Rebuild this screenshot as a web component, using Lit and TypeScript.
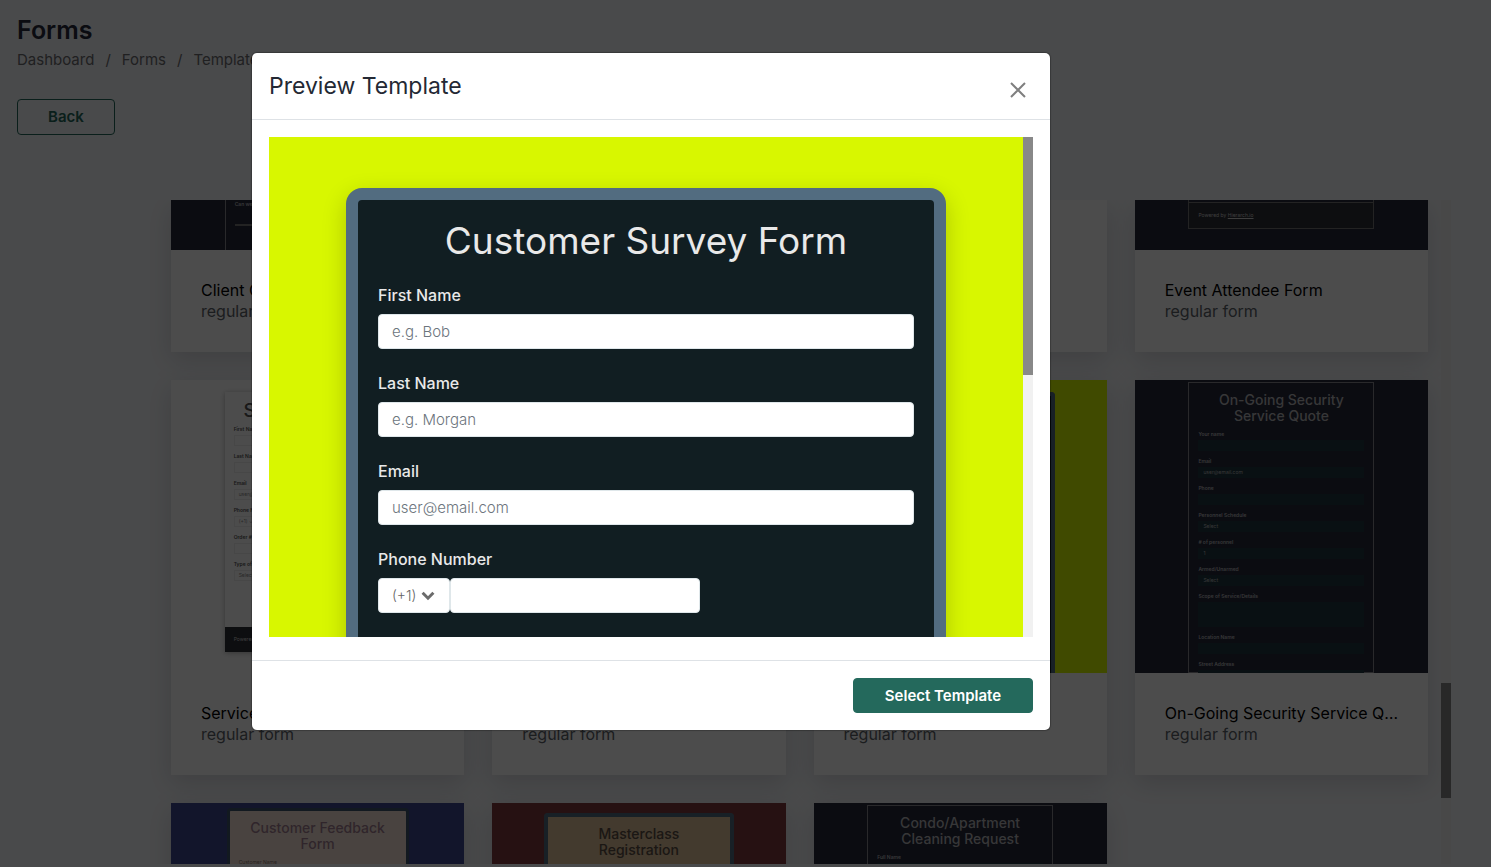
import { LitElement, html, css, svg, nothing } from "lit";
import { customElement, property } from "lit/decorators.js";
import { classMap } from "lit/directives/class-map.js";

interface Field {
  label: string;
  value?: string;
  tall?: boolean;
}

interface Template {
  name: string;
  theme: string;
  heading: string[];
  fields: Field[];
  footer?: string;
  tail?: boolean;
}

const TEMPLATES: Template[] = [
  { name: "Client Contact Form", theme: "night", heading: [], fields: [{ label: "Can we contact you?" }], tail: true },
  { name: "Contact Form", theme: "plain", heading: [], fields: [], tail: true },
  { name: "Booking Form", theme: "plain", heading: [], fields: [], tail: true },
  { name: "Event Attendee Form", theme: "night", heading: [], fields: [], footer: "Hierarch.io", tail: true },
  {
    name: "Service Request Form",
    theme: "light",
    heading: ["Service Request"],
    fields: [
      { label: "First Name" },
      { label: "Last Name" },
      { label: "Email", value: "user@email.com" },
      { label: "Phone Number", value: "(+1) ⌄" },
      { label: "Order #" },
      { label: "Type of Service", value: "Select" },
    ],
    footer: "Hierarch.io",
  },
  { name: "Feedback Form", theme: "plain", heading: [], fields: [] },
  { name: "Customer Survey Form", theme: "lime", heading: [], fields: [] },
  {
    name: "On-Going Security Service Quote",
    theme: "night",
    heading: ["On-Going Security", "Service Quote"],
    fields: [
      { label: "Your name" },
      { label: "Email", value: "user@email.com" },
      { label: "Phone" },
      { label: "Personnel Schedule", value: "Select" },
      { label: "# of personnel", value: "1" },
      { label: "Armed/Unarmed", value: "Select" },
      { label: "Scope of Service/Details", tall: true },
      { label: "Location Name" },
      { label: "Street Address" },
    ],
  },
  { name: "Customer Feedback Form", theme: "blue", heading: ["Customer Feedback", "Form"], fields: [{ label: "Customer Name" }] },
  { name: "Masterclass Registration", theme: "red", heading: ["Masterclass", "Registration"], fields: [] },
  {
    name: "Condo/Apartment Cleaning Request",
    theme: "night",
    heading: ["Condo/Apartment", "Cleaning Request"],
    fields: [{ label: "Full Name" }],
  },
];

@customElement("template-card")
class TemplateCard extends LitElement {
  @property({ attribute: false }) template!: Template;

  static styles = css`
    :host {
      display: block;
      min-width: 0;
      background: #fff;
      box-shadow: 0 8px 24px rgba(60, 60, 70, 0.18);
    }
    .thumb {
      box-sizing: border-box;
      aspect-ratio: 1;
      overflow: hidden;
      display: flex;
      justify-content: center;
      padding-top: 2px;
    }
    .thumb.tail {
      aspect-ratio: auto;
      height: 50px;
      padding-top: 0;
    }
    .form {
      box-sizing: border-box;
      width: 186px;
      min-height: 100%;
      padding: 9px 9px 0;
      border: 1px solid transparent;
      display: flex;
      flex-direction: column;
    }
    .heading {
      margin: 0 0 6px;
      font-size: 14px;
      line-height: 16px;
      font-weight: 500;
      text-align: center;
      white-space: nowrap;
    }
    .line {
      display: block;
    }
    .field {
      display: flex;
      flex-direction: column;
      gap: 2px;
      margin-bottom: 6px;
      font-size: 5px;
      line-height: 8px;
    }
    .label {
      font-weight: 600;
    }
    .box {
      box-sizing: border-box;
      flex-shrink: 0;
      height: 11px;
      padding: 1px 4px;
      border: 1px solid transparent;
      line-height: 7px;
    }
    .box.tall {
      height: 25px;
    }
    .powered {
      font-size: 5px;
      line-height: 25px;
      padding: 0 9px;
      margin: 14px -9px 0;
      color: #ccc;
      background: #2c2f36;
    }
    .night {
      background: #25283a;
      color: #b8b8bc;
    }
    .night .form {
      border-color: #8a8a90;
    }
    .night .box {
      background: #213840;
    }
    .tail.night .form {
      border-top: 0;
      border-bottom: 0;
      padding-top: 0;
    }
    .tail.night .box {
      height: 1px;
      padding: 0;
      margin-top: 14px;
      background: #777;
    }
    .tail.night .form.ending {
      height: 29px;
      min-height: 0;
      padding: 2px 9px 0;
      border: 1px solid #777;
      border-top: 0;
    }
    .tail .powered {
      margin-top: 0;
      border-top: 1px solid #777;
    }
    .light,
    .plain {
      background: #fff;
      color: #555;
    }
    .light {
      padding-top: 12px;
    }
    .light .form {
      padding-top: 11px;
      min-height: 0;
      height: 260px;
      border: 0;
      box-shadow: 0 1px 5px rgba(0, 0, 0, 0.3);
    }
    .light .heading {
      font-size: 19px;
    }
    .light .box {
      border-color: #eee;
      color: #888;
    }
    .light .powered {
      margin-top: auto;
    }
    .lime {
      background: #d8f700;
      padding-top: 12px;
    }
    .lime .form {
      width: 190px;
      border: 4px solid #526c80;
      border-bottom: 0;
      border-radius: 4px 4px 0 0;
      background: #111e22;
    }
    .blue {
      background: #3f488f;
      color: #a07d90;
      padding-top: 5px;
    }
    .blue .form {
      width: 182px;
      border: 3px solid #3c566b;
      border-bottom: 0;
      border-radius: 4px 4px 0 0;
      background: #f5e2d6;
    }
    .blue .label {
      color: #85766d;
      font-weight: 400;
    }
    .red {
      background: #803a3e;
      color: #5a4d44;
      padding-top: 10px;
    }
    .red .form {
      width: 190px;
      border: 4px solid #526c80;
      border-bottom: 0;
      border-radius: 4px 4px 0 0;
      background: #dfc199;
    }
    .body {
      padding: 30px 24px 30px 30px;
      font-size: 16px;
      line-height: 21px;
    }
    .name {
      margin: 0;
      font-size: 16px;
      font-weight: 400;
      color: #000;
      white-space: nowrap;
      overflow: hidden;
      text-overflow: ellipsis;
    }
    .kind {
      margin: 0;
      color: #5c6269;
    }
  `;

  render() {
    const t = this.template;
    return html`
      <div class=${classMap({ thumb: true, [t.theme]: true, tail: !!t.tail })}>
        <div class=${classMap({ form: true, ending: !!t.footer })}>
          ${t.heading.length
            ? html`<h3 class="heading">${t.heading.map((line) => html`<span class="line">${line}</span>`)}</h3>`
            : nothing}
          ${t.fields.map(
            (f) => html`<div class="field">
              <span class="label">${f.label}</span>
              <span class=${classMap({ box: true, tall: !!f.tall })}>${f.value ?? nothing}</span>
            </div>`
          )}
          ${t.footer ? html`<div class="powered">Powered by <u>${t.footer}</u></div>` : nothing}
        </div>
      </div>
      <div class="body">
        <h2 class="name">${t.name}</h2>
        <p class="kind">regular form</p>
      </div>
    `;
  }
}

@customElement("survey-form")
class SurveyForm extends LitElement {
  static styles = css`
    :host {
      display: flex;
      height: 500px;
      overflow: hidden;
    }
    .canvas {
      flex: 1;
      min-width: 0;
      display: flex;
      justify-content: center;
      padding-top: 51px;
      background: #d8f700;
    }
    .card {
      box-sizing: border-box;
      width: 600px;
      height: 900px;
      padding: 20px;
      border: 12px solid #526c80;
      border-radius: 16px;
      background: #111e22;
      color: #e9e9e9;
      box-shadow: 0 8px 24px rgba(0, 0, 0, 0.2);
    }
    .title {
      margin: 0 0 24px;
      font-size: 37px;
      line-height: 41px;
      font-weight: 400;
      text-align: center;
    }
    .field {
      display: flex;
      flex-direction: column;
      gap: 8px;
      margin-bottom: 24px;
    }
    .label {
      font-size: 16px;
      line-height: 21px;
      font-weight: 500;
    }
    .input,
    .code {
      box-sizing: border-box;
      height: 35px;
      margin: 0;
      padding: 0 13px;
      border: 1px solid #dfe7ea;
      border-radius: 4px;
      background: #fff;
      font: 300 15px/20px Inter, sans-serif;
      color: #666;
    }
    .input::placeholder {
      color: #6c757d;
      opacity: 1;
    }
    .phone {
      display: flex;
    }
    .number {
      width: 250px;
    }
    .picker {
      display: grid;
      align-items: center;
    }
    .code {
      grid-area: 1 / 1;
      width: 72px;
      font-size: 14px;
      appearance: none;
    }
    .chevron {
      grid-area: 1 / 1;
      justify-self: end;
      margin-right: 15px;
      pointer-events: none;
    }
    .track {
      width: 10px;
      background: #f1f1f1;
    }
    .grip {
      height: 238px;
      background: #888;
    }
  `;

  render() {
    const fields = [
      ["first", "First Name", "text", "e.g. Bob"],
      ["last", "Last Name", "text", "e.g. Morgan"],
      ["email", "Email", "email", "user@email.com"],
    ];
    return html`
      <div class="canvas">
        <form class="card">
          <h1 class="title">Customer Survey Form</h1>
          ${fields.map(
            ([id, label, type, hint]) => html`<div class="field">
              <label class="label" for=${id}>${label}</label>
              <input class="input" id=${id} type=${type} placeholder=${hint} />
            </div>`
          )}
          <div class="field">
            <label class="label" for="phone">Phone Number</label>
            <div class="phone">
              <span class="picker">
                <select class="code" aria-label="Country code">
                  <option>(+1)</option>
                </select>
                <svg class="chevron" width="14" height="10" viewBox="0 0 14 10" fill="none" stroke="#6b6b6b" stroke-width="3">
                  ${svg`<path d="M1.6 1.8 7 7.2 12.4 1.8" />`}
                </svg>
              </span>
              <input class="input number" id="phone" type="tel" />
            </div>
          </div>
        </form>
      </div>
      <div class="track"><div class="grip"></div></div>
    `;
  }
}

@customElement("app-root")
class AppRoot extends LitElement {
  static styles = css`
    :host {
      display: block;
      position: relative;
      height: 100vh;
      overflow: hidden;
      background: #f6f8fb;
      font-family: Inter, "Open Sans", sans-serif;
    }
    .page {
      box-sizing: border-box;
      height: 100%;
      display: flex;
      flex-direction: column;
      padding: 14px 40px 3px 17px;
    }
    .heading {
      margin: 0;
      font-size: 25px;
      line-height: 32px;
      font-weight: 600;
      color: #25283a;
    }
    .crumbs {
      display: flex;
      gap: 11px;
      margin: 3px 0 29px;
      font-size: 15px;
      line-height: 21px;
      color: #6b6b70;
    }
    .crumb {
      color: inherit;
      text-decoration: none;
    }
    .btn {
      box-sizing: border-box;
      font: 600 15px/20px Inter, sans-serif;
      border: 1px solid #24695c;
      border-radius: 4px;
      cursor: pointer;
    }
    .back {
      align-self: flex-start;
      width: 98px;
      height: 36px;
      background: transparent;
      color: #24695c;
    }
    .scroller {
      flex: 1;
      min-height: 0;
      display: flex;
      margin: 65px 0 0 129px;
      overflow: hidden;
    }
    .grid {
      flex: 1;
      display: grid;
      grid-template-columns: repeat(4, minmax(0, 1fr));
      align-content: start;
      gap: 28px;
      padding: 0 13px 0 25px;
    }
    .track {
      width: 10px;
      background: #f1f1f1;
    }
    .grip {
      height: 115px;
      margin-top: 483px;
      background: #888;
    }
    .overlay {
      position: absolute;
      inset: 0;
      display: flex;
      justify-content: center;
      align-items: flex-start;
      padding: 53px 189px 0 0;
      background: rgba(0, 0, 0, 0.7);
    }
    .modal {
      width: 798px;
      border-radius: 5px;
      background: #fff;
      box-shadow: 0 0 1px 1px rgba(0, 0, 0, 0.25);
    }
    .head {
      display: flex;
      justify-content: space-between;
      padding: 17px;
      border-bottom: 1px solid #dee2e6;
    }
    .title {
      margin: 0;
      font-size: 23px;
      line-height: 32px;
      font-weight: 400;
      color: #242934;
    }
    .close {
      display: flex;
      padding: 9px 4px 0;
      border: 0;
      background: none;
      cursor: pointer;
    }
    .content {
      padding: 17px 17px 23px;
    }
    .foot {
      display: flex;
      justify-content: flex-end;
      padding: 17px;
      border-top: 1px solid #dee2e6;
    }
    .select {
      width: 180px;
      height: 35px;
      background: #24695c;
      color: #fff;
    }
  `;

  render() {
    return html`
      <main class="page">
        <h1 class="heading">Forms</h1>
        <nav class="crumbs" aria-label="Breadcrumb">
          <a class="crumb" href="#dashboard">Dashboard</a><span>/</span>
          <a class="crumb" href="#forms">Forms</a><span>/</span>
          <a class="crumb" href="#templates">Templates</a>
        </nav>
        <button class="btn back">Back</button>
        <section class="scroller">
          <div class="grid">
            ${TEMPLATES.map((t) => html`<template-card .template=${t}></template-card>`)}
          </div>
          <div class="track"><div class="grip"></div></div>
        </section>
      </main>
      <div class="overlay">
        <div class="modal" role="dialog" aria-modal="true" aria-labelledby="modal-title">
          <header class="head">
            <h2 class="title" id="modal-title">Preview Template</h2>
            <button class="close" aria-label="Close">
              <svg width="22" height="22" viewBox="0 0 22 22" fill="none" stroke="#7f7f7f" stroke-width="2">
                <path d="M4 4 18 18M18 4 4 18" />
              </svg>
            </button>
          </header>
          <div class="content"><survey-form></survey-form></div>
          <footer class="foot"><button class="btn select">Select Template</button></footer>
        </div>
      </div>
    `;
  }
}
